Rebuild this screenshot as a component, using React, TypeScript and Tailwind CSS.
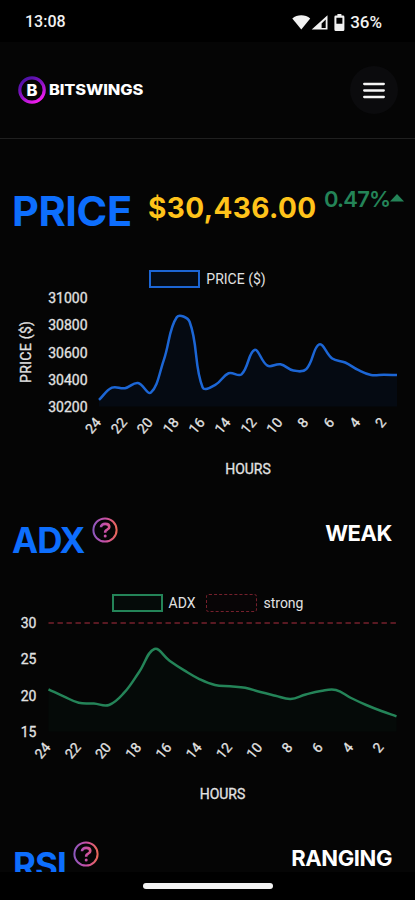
import { clsx } from 'clsx';

// ─── Data ─────────────────────────────────────────────────────────────────────

const PRICES = [
  30248, 30338, 30334, 30372, 30302, 30541, 30855, 30820, 30340, 30361, 30444, 30436,
  30615, 30500, 30510, 30464, 30475, 30656, 30552, 30523, 30468, 30431, 30433, 30431,
];

const ADX = [
  20.81, 19.84, 18.96, 18.85, 18.65, 20.34, 23.23, 26.35, 24.74, 23.37, 22.18, 21.4,
  21.22, 21.03, 20.43, 19.93, 19.47, 20.09, 20.57, 20.71, 19.61, 18.65, 17.82, 17.09,
];

// ─── Chart ────────────────────────────────────────────────────────────────────

type Point = { x: number; y: number };

// Cardinal spline, control points weighted by neighbour distance
function splinePath(pts: Point[], tension = 0.4) {
  const ctrl = pts.map((p, i) => {
    const prev = pts[i - 1] ?? p;
    const next = pts[i + 1] ?? p;
    const d1 = Math.hypot(p.x - prev.x, p.y - prev.y);
    const d2 = Math.hypot(next.x - p.x, next.y - p.y);
    const a = (tension * d1) / (d1 + d2);
    const b = (tension * d2) / (d1 + d2);
    return {
      inX: p.x - a * (next.x - prev.x),
      inY: p.y - a * (next.y - prev.y),
      outX: p.x + b * (next.x - prev.x),
      outY: p.y + b * (next.y - prev.y),
    };
  });
  return pts
    .map((p, i) =>
      i === 0
        ? `M${p.x} ${p.y}`
        : `C${ctrl[i - 1].outX} ${ctrl[i - 1].outY} ${ctrl[i].inX} ${ctrl[i].inY} ${p.x} ${p.y}`,
    )
    .join(' ');
}

interface LineChartProps {
  values: number[];
  ticks: number[];
  left: number;
  right: number;
  top: number;
  bottom: number;
  tickX: number;
  stroke: string;
  fill: string;
  yTitle?: string;
  threshold?: boolean;
}

function LineChart({ values, ticks, left, right, top, bottom, tickX, stroke, fill, yTitle, threshold }: LineChartProps) {
  const max = ticks[0];
  const min = ticks[ticks.length - 1];
  const scaleY = (v: number) => top + ((max - v) / (max - min)) * (bottom - top);
  const step = (right - left) / (values.length - 1);
  const pts = values.map((v, i) => ({ x: left + i * step, y: scaleY(v) }));
  const line = splinePath(pts);

  return (
    <svg width="415" height="200" className="block font-[Roboto,sans-serif] text-sm" fill="#e2e2e2">
      <path d={`${line} L${right} ${bottom} L${left} ${bottom} Z`} fill={fill} />
      {threshold && (
        <line x1={left} x2={right} y1={top + 0.5} y2={top + 0.5} stroke="#75202c" strokeWidth="1.6" strokeDasharray="5.4 3.6" />
      )}
      <path d={line} fill="none" stroke={stroke} strokeWidth="2.5" />
      {ticks.map((t) => (
        <text key={t} x={tickX} y={scaleY(t) + 5.5} textAnchor="end" stroke="#e2e2e2" strokeWidth="0.3">
          {t}
        </text>
      ))}
      {pts.map((p, i) =>
        i % 2 === 0 ? (
          <text
            key={i}
            transform={`translate(${p.x - 1} ${bottom + 13}) rotate(-50)`}
            y="5"
            textAnchor="end"
            stroke="#e2e2e2"
            strokeWidth="0.3"
          >
            {24 - i}
          </text>
        ) : null,
      )}
      {yTitle && (
        <text transform={`translate(30.5 ${(top + bottom) / 2}) rotate(-90)`} textAnchor="middle" stroke="#e2e2e2" strokeWidth="0.3" textLength="62">
          {yTitle}
        </text>
      )}
      <text x={(left + right) / 2} y={bottom + 67.5} textAnchor="middle" stroke="#e2e2e2" strokeWidth="0.3">
        HOURS
      </text>
    </svg>
  );
}

function LegendItem({ label, swatch }: { label: string; swatch: string }) {
  return (
    <div className="flex items-center gap-[6px]">
      <span className={clsx('h-[18px] w-[51px]', swatch)} />
      <span className="font-[Roboto,sans-serif] text-sm leading-[18px] text-[#e2e2e2]">{label}</span>
    </div>
  );
}

// ─── Icons ────────────────────────────────────────────────────────────────────

function HelpIcon({ id }: { id: string }) {
  return (
    <svg width="26" height="26" viewBox="0 0 26 26" fill="none" className="shrink-0">
      <defs>
        <linearGradient id={id} x1="0" y1="0" x2="26" y2="0" gradientUnits="userSpaceOnUse">
          <stop stopColor="#8659bf" />
          <stop offset="0.5" stopColor="#c94faa" />
          <stop offset="1" stopColor="#ee6a4f" />
        </linearGradient>
      </defs>
      <g stroke={`url(#${id})`} strokeWidth="2">
        <circle cx="13" cy="13" r="11.6" />
        <path d="M9 10.2c0-2.1 1.7-3.3 4.2-3.3 2.4 0 4.1 1.1 4.1 3 0 1.6-1 2.2-2.2 2.8-1.3.6-1.9 1-1.9 2.1v1" strokeWidth="2.6" />
      </g>
      <circle cx="13.2" cy="18.9" r="1.5" fill={`url(#${id})`} />
    </svg>
  );
}

function LogoMark() {
  return (
    <svg width="28" height="28" viewBox="0 0 28 28" className="shrink-0">
      <defs>
        <linearGradient id="logo-ring" x1="5" y1="3" x2="20" y2="26" gradientUnits="userSpaceOnUse">
          <stop stopColor="#4912a5" />
          <stop offset="0.5" stopColor="#8a12c4" />
          <stop offset="1" stopColor="#f51df0" />
        </linearGradient>
      </defs>
      <circle cx="14" cy="14" r="12.2" fill="none" stroke="url(#logo-ring)" strokeWidth="3.2" />
      <text x="14" y="20" textAnchor="middle" fill="#fff" className="font-[Inter,sans-serif] text-[16.5px] font-extrabold">
        B
      </text>
    </svg>
  );
}

function StatusIcons() {
  return (
    <svg width="55" height="20" viewBox="0 0 55 20" fill="#f1f1f1">
      {/* wifi */}
      <path d="M0.3 6.5C5 2.2 13.5 2.2 18.2 6.5L9.3 17.6Z" />
      {/* signal */}
      <path fillRule="evenodd" d="M19.7 17.6 35.5 3.2V17.6ZM29.6 11.4V15.9H33.7V7.6Z" />
      {/* battery */}
      <path fillRule="evenodd" d="M45.4 2h4v1.6h1.6q1.4 0 1.4 1.4v12.4q0 1.5-1.4 1.5h-7.2q-1.4 0-1.4-1.5V5q0-1.4 1.4-1.4h1.6ZM44.4 5.8v5.9h6V5.8Z" />
    </svg>
  );
}

// ─── Page ─────────────────────────────────────────────────────────────────────

export default function App() {
  return (
    <div className="flex h-[900px] w-[415px] flex-col overflow-hidden bg-[#050505] font-[Inter,sans-serif] text-white">
      {/* Status bar */}
      <div className="flex h-[42px] shrink-0 items-center justify-between bg-black pl-[25px] pr-[33px] font-[Roboto,sans-serif] text-base font-medium text-[#f1f1f1]">
        <span className="pt-px">13:08</span>
        <div className="flex items-center gap-[3px] pt-px">
          <StatusIcons />
          <span className="text-[17px] leading-6">36%</span>
        </div>
      </div>

      {/* Header */}
      <header className="flex h-[97px] shrink-0 items-center justify-between border-b border-[#202020] pl-[18px] pr-[17px]">
        <div className="flex items-center gap-[3px]">
          <LogoMark />
          <span className="origin-left scale-x-[1.13] text-[14.5px] leading-none font-extrabold tracking-[-0.1px]">BITSWINGS</span>
        </div>
        <button className="flex size-12 items-center justify-center rounded-full bg-[#0b0b0d]">
          <svg width="22" height="17" stroke="#f5f5f5" strokeWidth="2.3" strokeLinecap="round">
            <path d="M1.2 2H20.8M1.2 8.5H20.8M1.2 15H20.8" />
          </svg>
        </button>
      </header>

      <main className="min-h-0 flex-1 overflow-hidden">
        {/* Price */}
        <section className="h-[325px] pt-[48px]">
          <div className="flex h-[48px] items-start pl-[12px]">
            <h2 className="w-[136px] text-[41.5px] leading-[48px] font-bold tracking-[-0.4px] text-[#0d6efd]">PRICE</h2>
            <span className="mt-[5px] w-[176px] text-[28px] leading-8 font-bold tracking-[0.4px] whitespace-nowrap text-[#ffc31a]">$30,436.00</span>
            <span className="w-[66px] text-[22px] leading-6 font-semibold tracking-[-0.8px] text-[#248458]">0.47%</span>
            <svg width="14" height="8" className="mt-[7px]" fill="#248458">
              <path d="M7 0 14 7.5H0Z" />
            </svg>
          </div>
          <div className="mt-[35px] flex h-[18px] justify-center">
            <LegendItem label="PRICE ($)" swatch="border-2 border-[#1c66d5] bg-[#040b14]" />
          </div>
          <LineChart
            values={PRICES}
            ticks={[31000, 30800, 30600, 30400, 30200]}
            left={99}
            right={397}
            top={9.5}
            bottom={118.5}
            tickX={87.5}
            stroke="#1c66d5"
            fill="#050a12"
            yTitle="PRICE ($)"
          />
        </section>

        {/* ADX */}
        <section className="h-[325px] pt-[51px]">
          <div className="flex h-[46px] items-start justify-between pr-[23px] pl-[12px]">
            <div className="flex items-start gap-[8px]">
              <h2 className="mt-[2px] w-[72px] text-[35px] leading-[46px] font-bold tracking-[-1px] text-[#0d6efd]">ADX</h2>
              <div className="mt-[2px]">
                <HelpIcon id="help-adx" />
              </div>
            </div>
            <span className="mt-[1px] text-[22px] leading-[34px] font-bold tracking-[-0.4px]">WEAK</span>
          </div>
          <div className="mt-[33px] flex h-[18px] justify-center gap-[11px]">
            <LegendItem label="ADX" swatch="border-[2.5px] border-[#248458] bg-[#050b09]" />
            <LegendItem label="strong" swatch="border-[1.5px] border-dashed border-[#75202c] bg-[#080506] rounded-[3px]" />
          </div>
          <LineChart
            values={ADX}
            ticks={[30, 25, 20, 15]}
            left={48.5}
            right={396.5}
            top={10.5}
            bottom={119.5}
            tickX={36.5}
            stroke="#248458"
            fill="#050a08"
            threshold
          />
        </section>

        {/* RSI */}
        <section className="pt-[52px]">
          <div className="flex items-start justify-between pr-[23px] pl-[13px]">
            <div className="flex items-start gap-[8px]">
              <h2 className="mt-[1px] w-[52px] text-[35px] leading-[46px] font-bold tracking-[-1px] text-[#0d6efd]">RSI</h2>
              <HelpIcon id="help-rsi" />
            </div>
            <span className="text-[22px] leading-[34px] font-bold tracking-[-0.4px]">RANGING</span>
          </div>
        </section>
      </main>

      {/* Gesture bar */}
      <div className="flex h-[28px] shrink-0 justify-center bg-black pt-[11px]">
        <div className="h-[6px] w-[130px] rounded-full bg-[#f3f3f3]" />
      </div>
    </div>
  );
}
